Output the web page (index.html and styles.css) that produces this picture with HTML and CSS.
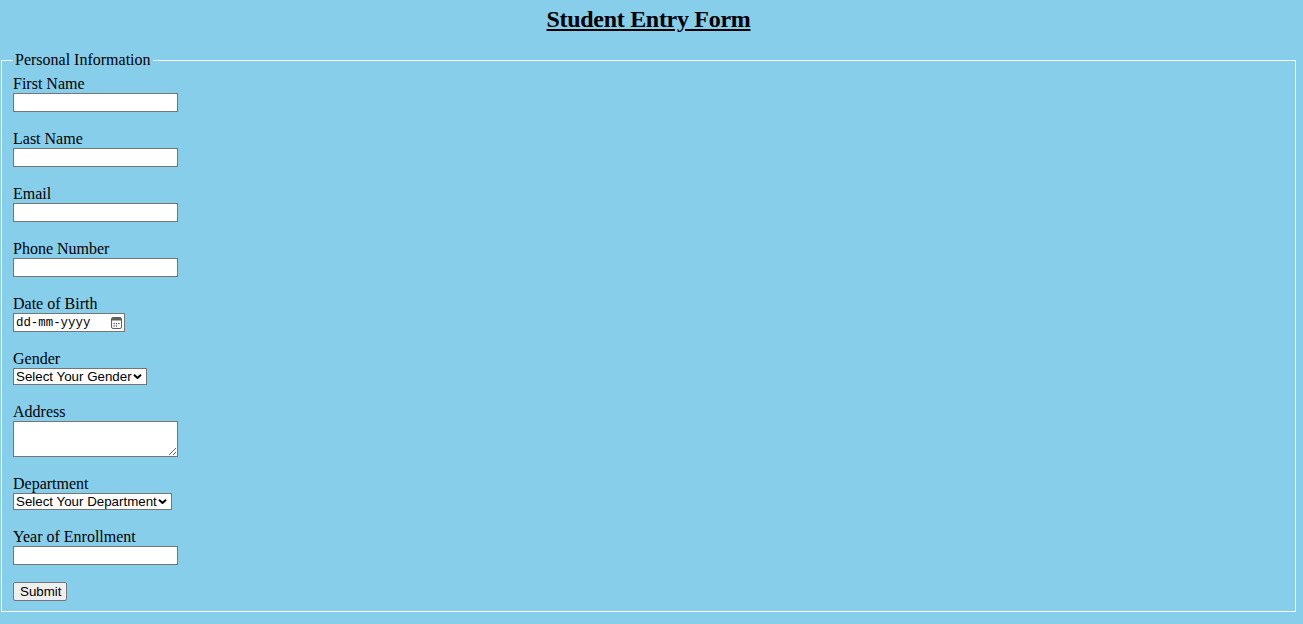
FILE: index.html
```html
<!DOCTYPE html>
<html>
<head>
<meta charset="utf-8">
<title>Student Entry Form</title>
<link rel="stylesheet" href="styles.css">
</head>
<body>
<form class="entry-form">
<h2 class="title">Student Entry Form</h2>
<fieldset class="info">
<legend>Personal Information</legend>
<div class="row">
<label for="fn">First Name</label>
<input type="text" id="fn" class="field">
</div>
<div class="row">
<label for="ln">Last Name</label>
<input type="text" id="ln" class="field">
</div>
<div class="row">
<label for="em">Email</label>
<input type="email" id="em" class="field">
</div>
<div class="row">
<label for="ph">Phone Number</label>
<input type="tel" id="ph" class="field">
</div>
<div class="row">
<label for="dob">Date of Birth</label>
<span class="ctl-wrap">
<input type="text" id="dob" class="date" placeholder="dd-mm-yyyy">
<svg class="cal" width="11" height="12" viewBox="0 0 11 12"><rect x="0.5" y="0.5" width="10" height="11" rx="1.5" fill="none" stroke="#5f5f5f"/><rect x="1" y="1" width="9" height="2.5" fill="#5f5f5f"/><rect x="2.5" y="6" width="1.2" height="1.2" fill="#444"/><rect x="4.9" y="6" width="1.2" height="1.2" fill="#444"/><rect x="7.3" y="6" width="1.2" height="1.2" fill="#444"/><rect x="2.5" y="8.4" width="1.2" height="1.2" fill="#444"/><rect x="4.9" y="8.4" width="1.2" height="1.2" fill="#444"/></svg>
</span>
</div>
<div class="row">
<label for="gd">Gender</label>
<span class="ctl-wrap">
<select id="gd" class="sel sel-gender"><option>Select Your Gender</option><option>Male</option><option>Female</option></select>
<svg class="chev" width="9" height="5" viewBox="0 0 9 5"><path d="M1 0.8 L4.5 4 L8 0.8" fill="none" stroke="#000" stroke-width="2"/></svg>
</span>
</div>
<div class="row">
<label for="ad">Address</label>
<textarea id="ad" class="area"></textarea>
</div>
<div class="row">
<label for="dp">Department</label>
<span class="ctl-wrap">
<select id="dp" class="sel sel-dept"><option>Select Your Department</option><option>Computer Science</option></select>
<svg class="chev" width="9" height="5" viewBox="0 0 9 5"><path d="M1 0.8 L4.5 4 L8 0.8" fill="none" stroke="#000" stroke-width="2"/></svg>
</span>
</div>
<div class="row row-last">
<label for="yr">Year of Enrollment</label>
<input type="text" id="yr" class="field">
</div>
<input type="submit" value="Submit" class="submit">
</fieldset>
</form>
</body>
</html>
```
FILE: styles.css
```css
html, body {
  background: #87ceeb;
}
body {
  margin: 0;
  font-family: "Liberation Serif", "Times New Roman", serif;
  font-size: 16px;
  color: #000;
}
.entry-form {
  margin: 0 7px 0 1px;
}
.title {
  text-align: center;
  text-decoration: underline;
  font-size: 24px;
  letter-spacing: -0.3px;
  margin: 6px 0 18px;
}
.info {
  margin: 0;
  border: 1px solid #fff;
  padding: 6px 11px 10px;
}
.info legend {
  padding: 0 2px;
}
.row {
  display: flex;
  flex-direction: column;
  align-items: flex-start;
  margin-bottom: 18px;
}
.row-last {
  margin-bottom: 17px;
}
.row label {
  line-height: 18px;
}
.field, .date, .area, .sel, .submit {
  box-sizing: border-box;
  margin: 0;
  border: 1px solid #767676;
  background: #fff;
  font-family: "Liberation Sans", Arial, sans-serif;
  font-size: 13.33px;
  color: #000;
}
.field {
  width: 165px;
  height: 19px;
  padding: 1px 2px;
  border-radius: 0;
}
.ctl-wrap {
  position: relative;
  display: inline-block;
  line-height: 0;
}
.date {
  width: 112px;
  height: 19px;
  padding: 1px 2px;
  font-family: "Liberation Mono", "DejaVu Sans Mono", monospace;
  font-size: 12.4px;
}
.date::placeholder {
  color: #000;
  opacity: 1;
}
.cal {
  position: absolute;
  left: 98px;
  top: 4px;
}
.sel {
  -webkit-appearance: none;
  appearance: none;
  height: 17px;
  padding: 0 0 0 2px;
  border-radius: 0;
  line-height: 15px;
}
.sel-gender {
  width: 134px;
}
.sel-dept {
  width: 159px;
}
.chev {
  position: absolute;
  top: 6px;
  right: 5px;
  pointer-events: none;
}
.area {
  width: 165px;
  height: 36px;
  padding: 2px;
  resize: both;
}
.submit {
  width: 54px;
  height: 19px;
  padding: 0 6px;
  background: #efefef;
  border-radius: 2px;
}
```
